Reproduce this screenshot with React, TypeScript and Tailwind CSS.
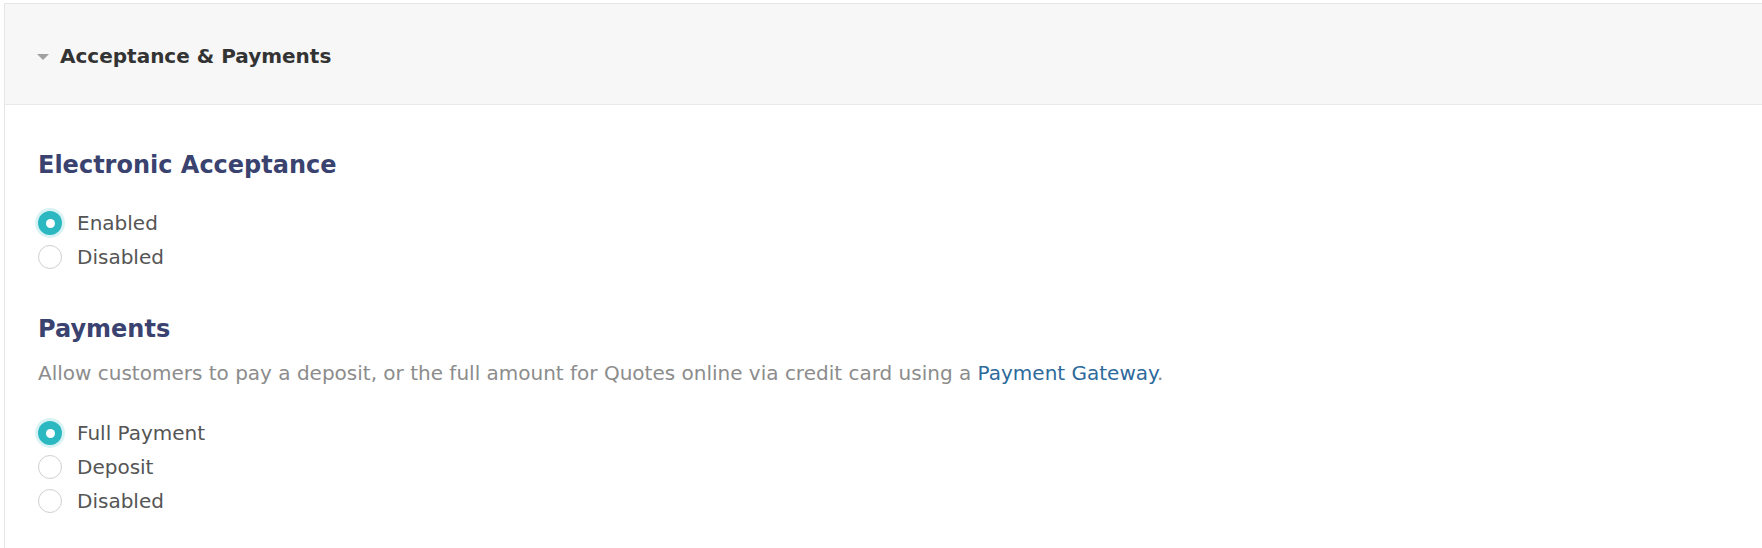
import React from 'react';

type Option = { label: string; checked?: boolean };

function Radio({ label, checked }: Option) {
    return (
        <label className="flex items-center h-[34px] gap-[15px] text-[#555555]">
            {checked ? (
                <span className="w-[24px] h-[24px] rounded-full bg-[#2bb8c1] flex items-center justify-center shadow-[0_0_0_3px_rgba(43,184,193,0.18)]">
                    <span className="w-[9px] h-[9px] rounded-full bg-white" />
                </span>
            ) : (
                <span className="w-[24px] h-[24px] rounded-full bg-white border border-[#cfcfcf]" />
            )}
            <span>{label}</span>
        </label>
    );
}

export default function App() {
    return (
        <div className="w-[1762px] h-[548px] bg-white overflow-hidden pt-[3px] pl-[4px] font-['DejaVu_Sans',sans-serif]">
            <div className="h-full border-t border-l border-[#e6e6e6]">
                <div className="h-[101px] bg-[#f7f7f7] border-b border-[#e8e8e8] flex items-center pl-[32px] gap-[11px] pt-[4px]">
                    <svg width="12" height="6" viewBox="0 0 12 6" className="mt-[1px]">
                        <path d="M0 0 L12 0 L6 6 Z" fill="#a0a0a0" />
                    </svg>
                    <span className="text-[20px] font-bold text-[#333333]">Acceptance &amp; Payments</span>
                </div>
                <div className="pl-[33px] flex flex-col">
                    <h2 className="mt-[45px] text-[24px] leading-[30px] font-bold text-[#3a4370]">Electronic Acceptance</h2>
                    <div className="mt-[26px] flex flex-col text-[20px]">
                        <Radio label="Enabled" checked />
                        <Radio label="Disabled" />
                    </div>
                    <h2 className="mt-[40px] text-[24px] leading-[30px] font-bold text-[#3a4370]">Payments</h2>
                    <p className="mt-[15px] text-[20px] leading-[28px] text-[#8c8c8c]">
                        Allow customers to pay a deposit, or the full amount for Quotes online via credit card using a{' '}
                        <a className="text-[#2d6a9c]">Payment Gateway</a>.
                    </p>
                    <div className="mt-[29px] flex flex-col text-[20px]">
                        <Radio label="Full Payment" checked />
                        <Radio label="Deposit" />
                        <Radio label="Disabled" />
                    </div>
                </div>
            </div>
        </div>
    );
}
